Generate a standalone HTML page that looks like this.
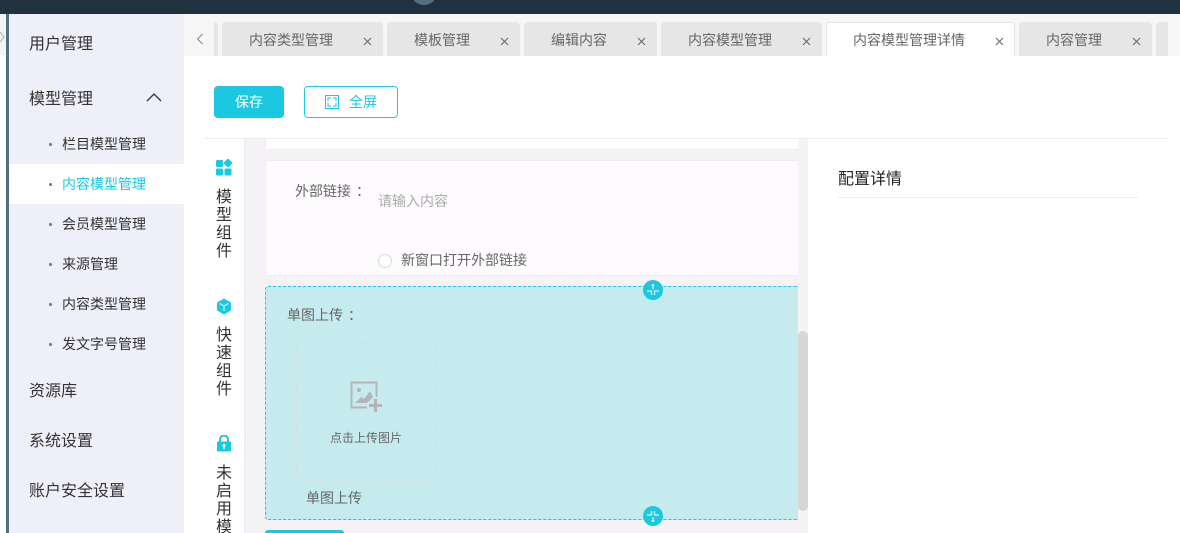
<!DOCTYPE html>
<html><head><meta charset="utf-8"><title>内容模型管理详情</title>
<style>
*{box-sizing:border-box}
html,body{margin:0;padding:0;width:1180px;height:533px;overflow:hidden;background:#fff}
body{position:relative;font-family:"WenQuanYi Zen Hei","Liberation Sans",sans-serif;color:#333}
.a{position:absolute;white-space:nowrap}
.c{position:relative;left:5px}
.tab{position:absolute;top:22px;height:34px;background:#e6e6e6;border-radius:4px 4px 0 0;color:#666;font-size:14px;line-height:36px}
.tab b{position:absolute;top:0;font-weight:normal;white-space:nowrap}
.tab svg{position:absolute;top:15px}
.m{position:absolute;left:29px;font-size:16px;line-height:20px;color:#333;white-space:nowrap}
.s{position:absolute;left:62px;font-size:14px;line-height:20px;color:#333;white-space:nowrap}
.d{position:absolute;left:49px;width:3px;height:3px;border-radius:50%;background:#777}
.v{position:absolute;left:214px;width:20px;font-size:16px;line-height:18px;text-align:center;color:#333;white-space:normal}
</style></head><body>
<div class="a" style="left:0;top:0;width:1180px;height:14px;background:#22313e"></div>
<div class="a" style="left:411px;top:-20px;width:26px;height:25px;border-radius:50%;background:#4f6f80"></div>
<div class="a" style="left:0;top:14px;width:6px;height:41px;background:#f4f4f4"></div>
<svg class="a" style="left:0;top:31px" width="5" height="14"><path d="M0 1L4 6L0 11" fill="none" stroke="#aaa"/></svg>
<div class="a" style="left:6px;top:14px;width:3px;height:519px;background:#53707f"></div>
<div class="a" style="left:9px;top:14px;width:175px;height:519px;background:#eeeff8"></div>
<div class="a" style="left:9px;top:164px;width:175px;height:40px;background:#fff"></div>
<div class="m" style="top:35px">用户管理</div>
<div class="m" style="top:90px">模型管理</div>
<svg class="a" style="left:146px;top:92px" width="16" height="10"><path d="M1 9L8 2L15 9" fill="none" stroke="#333" stroke-width="1.3"/></svg>
<i class="d" style="top:143px"></i><div class="s" style="top:134px">栏目模型管理</div>
<i class="d" style="top:183px"></i><div class="s" style="top:174px;color:#1bc8e0">内容模型管理</div>
<i class="d" style="top:223px"></i><div class="s" style="top:214px">会员模型管理</div>
<i class="d" style="top:263px"></i><div class="s" style="top:254px">来源管理</div>
<i class="d" style="top:303px"></i><div class="s" style="top:294px">内容类型管理</div>
<i class="d" style="top:343px"></i><div class="s" style="top:334px">发文字号管理</div>
<div class="m" style="top:382px">资源库</div>
<div class="m" style="top:432px">系统设置</div>
<div class="m" style="top:482px">账户安全设置</div>

<div class="a" style="left:184px;top:14px;width:996px;height:42px;background:#f6f6f6"></div>
<svg class="a" style="left:196px;top:33px" width="8" height="12"><path d="M6.5 1L1.5 6L6.5 11" fill="none" stroke="#888"/></svg>
<div class="a" style="left:214px;top:22px;width:4px;height:34px;background:#e6e6e6;border-radius:0 4px 0 0"></div>
<div class="tab" style="left:222px;width:161px"><b style="left:27px">内容类型管理</b><svg style="left:141px" width="9" height="9"><path d="M1 1L8 8M8 1L1 8" stroke="#666"/></svg></div>
<div class="tab" style="left:387px;width:133px"><b style="left:27px">模板管理</b><svg style="left:113px" width="9" height="9"><path d="M1 1L8 8M8 1L1 8" stroke="#666"/></svg></div>
<div class="tab" style="left:524px;width:133px"><b style="left:27px">编辑内容</b><svg style="left:113px" width="9" height="9"><path d="M1 1L8 8M8 1L1 8" stroke="#666"/></svg></div>
<div class="tab" style="left:661px;width:161px"><b style="left:27px">内容模型管理</b><svg style="left:141px" width="9" height="9"><path d="M1 1L8 8M8 1L1 8" stroke="#666"/></svg></div>
<div class="tab" style="left:826px;width:189px;background:#fff;box-shadow:inset 0 1px 0 #e6e6e6,inset 1px 0 0 #e6e6e6,inset -1px 0 0 #e6e6e6"><b style="left:27px">内容模型管理详情</b><svg style="left:169px" width="9" height="9"><path d="M1 1L8 8M8 1L1 8" stroke="#666"/></svg></div>
<div class="tab" style="left:1019px;width:133px"><b style="left:27px">内容管理</b><svg style="left:113px" width="9" height="9"><path d="M1 1L8 8M8 1L1 8" stroke="#666"/></svg></div>
<div class="a" style="left:1156px;top:22px;width:12px;height:34px;background:#e6e6e6;border-radius:4px 0 0 0"></div>
<div class="a" style="left:1168px;top:22px;width:12px;height:34px;background:#f6f6f6"></div>

<div class="a" style="left:214px;top:86px;width:70px;height:32px;background:#1bc8e0;border-radius:4px;color:#fff;font-size:14px;line-height:32px;text-align:center">保存</div>
<div class="a" style="left:304px;top:86px;width:94px;height:32px;border:1px solid #1bc8e0;border-radius:4px;color:#1bc8e0;font-size:14px;line-height:30px;padding-left:44px">全屏</div>
<svg class="a" style="left:325px;top:95px" width="14" height="14"><rect x=".5" y=".5" width="13" height="13" fill="none" stroke="#1bc8e0"/><path d="M3 6V3H6M8 3H11V6M11 8V11H8M6 11H3V8" fill="none" stroke="#1bc8e0"/></svg>
<div class="a" style="left:204px;top:138px;width:964px;height:1px;background:#ececec"></div>

<div class="a" style="left:244px;top:139px;width:564px;height:394px;background:#f6f3f7;border-left:1px solid #ececf0"></div>
<div class="a" style="left:265px;top:139px;width:533px;height:11px;background:#fff;border:1px solid #efebef;border-top:0;border-right:0;border-radius:0 0 0 3px"></div>
<div class="a" style="left:265px;top:160px;width:533px;height:116px;background:#fefbfe;border:1px solid #efebef;border-right:0"></div>
<div class="a" style="left:295px;top:181px;font-size:14px;line-height:20px;color:#666">外部链接<span class="c">：</span></div>
<div class="a" style="left:378px;top:191px;font-size:14px;line-height:20px;color:#aaa">请输入内容</div>
<div class="a" style="left:378px;top:254px;width:14px;height:14px;border-radius:50%;border:1px solid #d9d9d9;background:#fff"></div>
<div class="a" style="left:401px;top:250px;font-size:14px;line-height:20px;color:#666">新窗口打开外部链接</div>

<div class="a" style="left:265px;top:286px;width:533px;height:234px;background:#c5ebee;border:1px dashed #1bc8e0;border-right:0;border-radius:3px 0 0 3px"></div>
<div class="a" style="left:287px;top:305px;font-size:14px;line-height:20px;color:#666">单图上传<span class="c">：</span></div>
<div class="a" style="left:296px;top:343px;width:140px;height:140px;border:1px dashed #d6dde2;border-radius:4px"></div>
<svg class="a" style="left:350px;top:381px" width="32" height="32"><path d="M17 26.500H1.500V1.500H26.500V16" fill="none" stroke="#b5b5b8" stroke-width="2"/><circle cx="9" cy="9" r="2" fill="#b5b5b8"/><path d="M5 22L11 16L14 18L20 10L23 16L17 22Z" fill="#b5b5b8"/><rect x="19" y="23" width="13" height="3" fill="#b5b5b8"/><rect x="24" y="18" width="3" height="13" fill="#b5b5b8"/></svg>
<div class="a" style="left:330px;top:429px;font-size:12px;line-height:18px;color:#666">点击上传图片</div>
<div class="a" style="left:306px;top:488px;font-size:14px;line-height:20px;color:#666">单图上传</div>
<div class="a" style="left:265px;top:530px;width:79px;height:3px;background:#1bc8e0;border-radius:3px 3px 0 0"></div>

<svg class="a" style="left:643px;top:280px" width="20" height="20"><circle cx="10" cy="10" r="10" fill="#1bc8e0"/><path d="M10 4V9M4 11H8.500V15M16 11H11.500V15" fill="none" stroke="#d8f6fa" stroke-width="1.300"/><path d="M8 6L10 3.500L12 6Z" fill="#d8f6fa"/></svg>
<svg class="a" style="left:643px;top:506px" width="20" height="20"><circle cx="10" cy="10" r="10" fill="#1bc8e0"/><path d="M10 11V16M4 9H8.500V5M16 9H11.500V5" fill="none" stroke="#d8f6fa" stroke-width="1.300"/><path d="M8 14L10 16.500L12 14Z" fill="#d8f6fa"/></svg>
<div class="a" style="left:798px;top:331px;width:10px;height:180px;background:#d6d6d6;border-radius:5px"></div>

<svg class="a" style="left:216px;top:159px" width="17" height="17" fill="#1bc8e0"><rect x="0" y="1" width="7" height="7" rx="1.500"/><path d="M12 0L16 4L12 8L8 4Z" stroke="#1bc8e0" stroke-linejoin="round"/><rect x="0" y="9.500" width="7" height="7" rx="1.500"/><rect x="8.500" y="9.500" width="7" height="7" rx="1.500"/></svg>
<div class="v" style="top:189px">模型组件</div>
<svg class="a" style="left:216px;top:298px" width="16" height="17"><path d="M8 .5L15 4.500V12.500L8 16.500L1 12.500V4.500Z" fill="#1bc8e0"/><path d="M3.500 5.500L8 8L12.500 5.500M8 8V13" fill="none" stroke="#c9f3f8" stroke-width="1.200"/></svg>
<div class="v" style="top:327px">快速组件</div>
<svg class="a" style="left:217px;top:435px" width="14" height="17"><path d="M3 7V4.500A4 4 0 0 1 11 4.500V7" fill="none" stroke="#1bc8e0" stroke-width="2"/><rect x="0" y="6.500" width="14" height="10" rx="1" fill="#1bc8e0"/><circle cx="7" cy="10.500" r="1.500" fill="#fff"/><rect x="6.300" y="11" width="1.400" height="3" fill="#fff"/></svg>
<div class="v" style="top:465px">未启用模</div>

<div class="a" style="left:838px;top:170px;font-size:16px;line-height:20px;color:#222">配置详情</div>
<div class="a" style="left:838px;top:197px;width:300px;height:1px;background:#ececec"></div>
</body></html>
